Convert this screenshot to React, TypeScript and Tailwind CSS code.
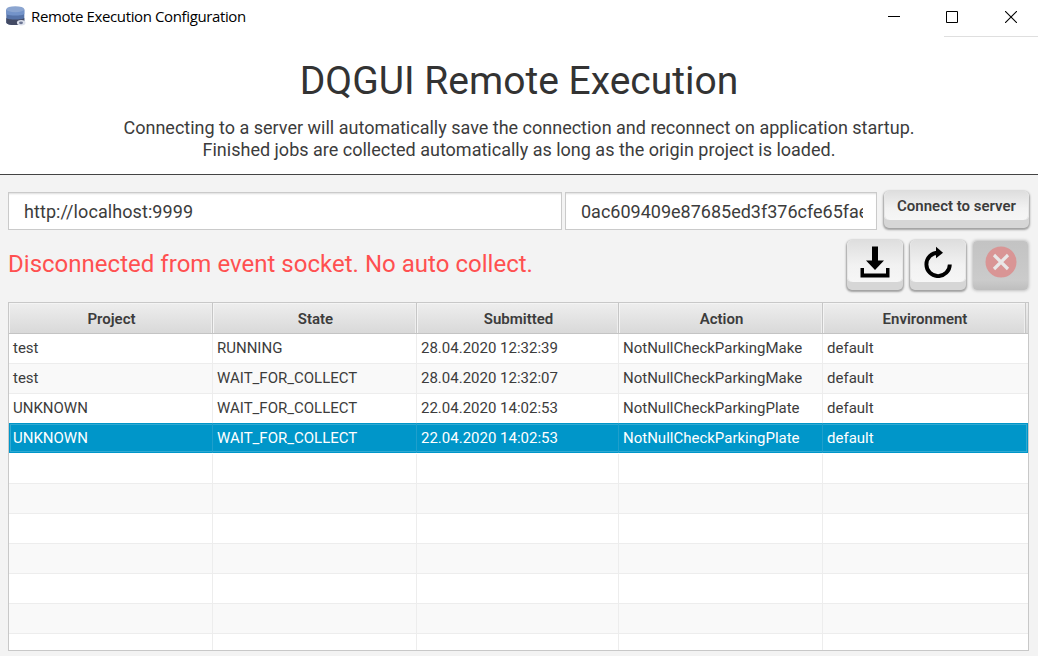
import type { ReactNode } from "react";

type Job = { project: string; state: string; submitted: string; action: string; environment: string };

const jobs: Job[] = [
  { project: "test", state: "RUNNING", submitted: "28.04.2020 12:32:39", action: "NotNullCheckParkingMake", environment: "default" },
  { project: "test", state: "WAIT_FOR_COLLECT", submitted: "28.04.2020 12:32:07", action: "NotNullCheckParkingMake", environment: "default" },
  { project: "UNKNOWN", state: "WAIT_FOR_COLLECT", submitted: "22.04.2020 14:02:53", action: "NotNullCheckParkingPlate", environment: "default" },
  { project: "UNKNOWN", state: "WAIT_FOR_COLLECT", submitted: "22.04.2020 14:02:53", action: "NotNullCheckParkingPlate", environment: "default" },
];
const selectedIndex = 3;
const columns = ["Project", "State", "Submitted", "Action", "Environment"];
const rowCount = 11;
const grid = "grid grid-cols-[204px_204px_202px_204px_204px]";

function DatabaseIcon() {
  return (
    <svg width="20" height="21" viewBox="0 0 20 21" className="shrink-0">
      <path d="M0.3 3.5v13c0 1.6 4 2.6 9 2.6s9-1 9-2.6v-13z" fill="#5673a8" />
      <path d="M0.3 3.5v4.5c2 2 16 2 18 0V3.5z" fill="#7393c9" />
      <path d="M0.3 12c2 2 16 2 18 0v4.5c0 1.6-4 2.6-9 2.6s-9-1-9-2.6z" fill="#434a63" />
      <ellipse cx="9.3" cy="3.2" rx="9" ry="3" fill="#8ba5d0" />
      <ellipse cx="15.2" cy="16.8" rx="4.3" ry="2.7" fill="#dde1ec" />
      <ellipse cx="15" cy="16.8" rx="2" ry="1.4" fill="#6d7694" />
    </svg>
  );
}

function TitleBar() {
  return (
    <header className="flex h-[37px] items-start">
      <div className="flex flex-1 pl-1.5 pt-1.5">
        <DatabaseIcon />
        <span className="ml-[5px] whitespace-nowrap font-['Open_Sans',sans-serif] text-[15px] leading-5 tracking-[-0.38px] text-black">
          Remote Execution Configuration
        </span>
      </div>
      <div className="flex h-[37px] w-[56px] pt-4">
        <svg width="12" height="1"><path d="M0 .5h12" stroke="#000" /></svg>
      </div>
      <div className="flex h-[37px] w-[94px] border-b border-[#dfdfdf] pt-[11px]">
        <svg width="12" height="12" className="ml-[2px]"><path d="M.5.5h11v11H.5z" fill="none" stroke="#000" /></svg>
        <svg width="12" height="12" className="ml-[47px]"><path d="M0 0l12 12M12 0L0 12" stroke="#000" strokeWidth="1.1" /></svg>
      </div>
    </header>
  );
}

function TextField({ value, className }: { value: string; className: string }) {
  return (
    <div className={`h-[38px] border-[1.5px] border-[#cacaca] bg-white pl-[15px] pr-[13px] shadow-[inset_0_2px_2px_-1px_#dddddd] ${className}`}>
      <div className="overflow-hidden whitespace-nowrap leading-[37px]">{value}</div>
    </div>
  );
}

function RaisedButton({ children, className }: { children: ReactNode; className: string }) {
  return (
    <button className={`flex items-center justify-center rounded-[5px] bg-[#d6d6d6] pb-2 shadow-[0_1px_2px_1px_#a0a0a0] ${className}`}>
      <span className="flex size-full items-center justify-center rounded-[5px] bg-linear-to-b from-[#dedede] via-[#f2f2f2] via-60% to-[#f6f6f6] shadow-[inset_1px_0_0_#e6e6e6,inset_-1px_0_0_#e6e6e6]">
        {children}
      </span>
    </button>
  );
}

function HeaderCell({ label, last }: { label: string; last: boolean }) {
  return (
    <div className={`flex items-center justify-center border-r border-[#c6c6c6] pl-0.5 pt-0.5 shadow-[inset_1px_1px_0_#f4f4f4,inset_-1px_0_0_#eeeeee] ${last ? "mr-px" : ""}`}>
      {label}
    </div>
  );
}

function JobTable() {
  return (
    <section className="ml-2 mr-[9px] mt-[11px] flex h-[349px] flex-col overflow-hidden border border-[#c8c8c8] bg-white text-[15px] text-[#3c3c3c]">
      <div className={`${grid} h-[31px] shrink-0 border-b border-[#c4c4c4] bg-linear-to-b from-[#eeeeee] to-[#d9d9d9] font-semibold`}>
        {columns.map((label, i) => <HeaderCell key={label} label={label} last={i === 4} />)}
      </div>
      {Array.from({ length: rowCount }, (_, i) => {
        const job = jobs[i];
        const values = job ? [job.project, job.state, job.submitted, job.action, job.environment] : ["", "", "", "", ""];
        const selected = i === selectedIndex;
        return (
          <div
            key={i}
            className={`${grid} h-[30px] shrink-0 ${selected ? "-mt-px mb-px bg-[#0096c9] text-white shadow-[inset_0_0_0_1px_#0096c9,inset_0_0_0_2px_#30a9d2]" : i % 2 ? "border-b border-[#ededed] bg-[#f9f9f9]" : "border-b border-[#ededed] bg-white"}`}
          >
            {values.map((value, c) => (
              <div key={c} className={`flex items-center whitespace-nowrap pl-1 ${c === 4 ? "" : selected ? "border-r border-[#1f9fcc]" : "border-r border-[#ededed]"}`}>
                <span className={selected ? "" : "pb-px"}>{value}</span>
              </div>
            ))}
          </div>
        );
      })}
    </section>
  );
}

export default function App() {
  return (
    <div className="flex h-[656px] w-[1038px] flex-col overflow-hidden bg-[#f3f3f3] font-[Roboto,sans-serif] text-[#3c3c3c]">
      <div className="h-[175px] shrink-0 border-b-[1.5px] border-[#444444] bg-white">
        <TitleBar />
        <h1 className="mt-5 text-center text-[39px] leading-[48px] text-[#333333]">DQGUI Remote Execution</h1>
        <p className="mt-3 text-center text-[18px] leading-[22px]">
          Connecting to a server will automatically save the connection and reconnect on application startup.
          <br />
          Finished jobs are collected automatically as long as the origin project is loaded.
        </p>
      </div>
      <div className="mt-[17px] flex h-[38px] px-2 text-[18px]">
        <TextField value="http://localhost:9999" className="w-[554px] tracking-[0.08px]" />
        <TextField value="0ac609409e87685ed3f376cfe65fae2" className="ml-[3px] w-[312px]" />
        <RaisedButton className="-mt-px ml-[7px] h-[37px] w-[145px] shrink-0 self-start text-[15px] font-semibold">
          <span className="pt-0.5">Connect to server</span>
        </RaisedButton>
      </div>
      <div className="mt-2.5 flex h-[51px] pl-2">
        <p className="flex-1 text-[24px] leading-[48px] tracking-[0.02px] text-[#ff5050]">Disconnected from event socket. No auto collect.</p>
        <RaisedButton className="h-[50px] w-[56px]">
          <svg width="30" height="32" viewBox="0 0 30 32" className="mt-0.5">
            <path d="M12 .5h6v14h6L15 24 6 14.5h6z" />
            <path d="M.5 22h3.500v5.500h22V22h3.500v9.500H.5z" />
          </svg>
        </RaisedButton>
        <RaisedButton className="ml-[7px] h-[50px] w-[56px]">
          <svg width="30" height="32" viewBox="0 0 30 32" className="mt-0.5">
            <path d="M15 6.700A11.700 11.700 0 1 0 26.800 18.500" fill="none" stroke="#000" strokeWidth="3.900" />
            <path d="M13 .8l7 6-7 5.500z" />
          </svg>
        </RaisedButton>
        <div className="ml-[7px] mr-[10px] mt-px flex h-[49px] w-[55px] justify-center rounded-[4px] bg-linear-to-b from-[#c3c3c3] from-0% via-[#cbcbcb] via-80% to-[#bebebe] pt-[5px] shadow-[0_0_3px_1px_#c0c0c0]">
          <svg width="32" height="32" viewBox="0 0 32 32">
            <circle cx="16" cy="16" r="15.500" fill="#d99595" />
            <path d="M9 9l14 14M23 9L9 23" stroke="#e9e7e7" strokeWidth="3.200" />
          </svg>
        </div>
      </div>
      <JobTable />
    </div>
  );
}
